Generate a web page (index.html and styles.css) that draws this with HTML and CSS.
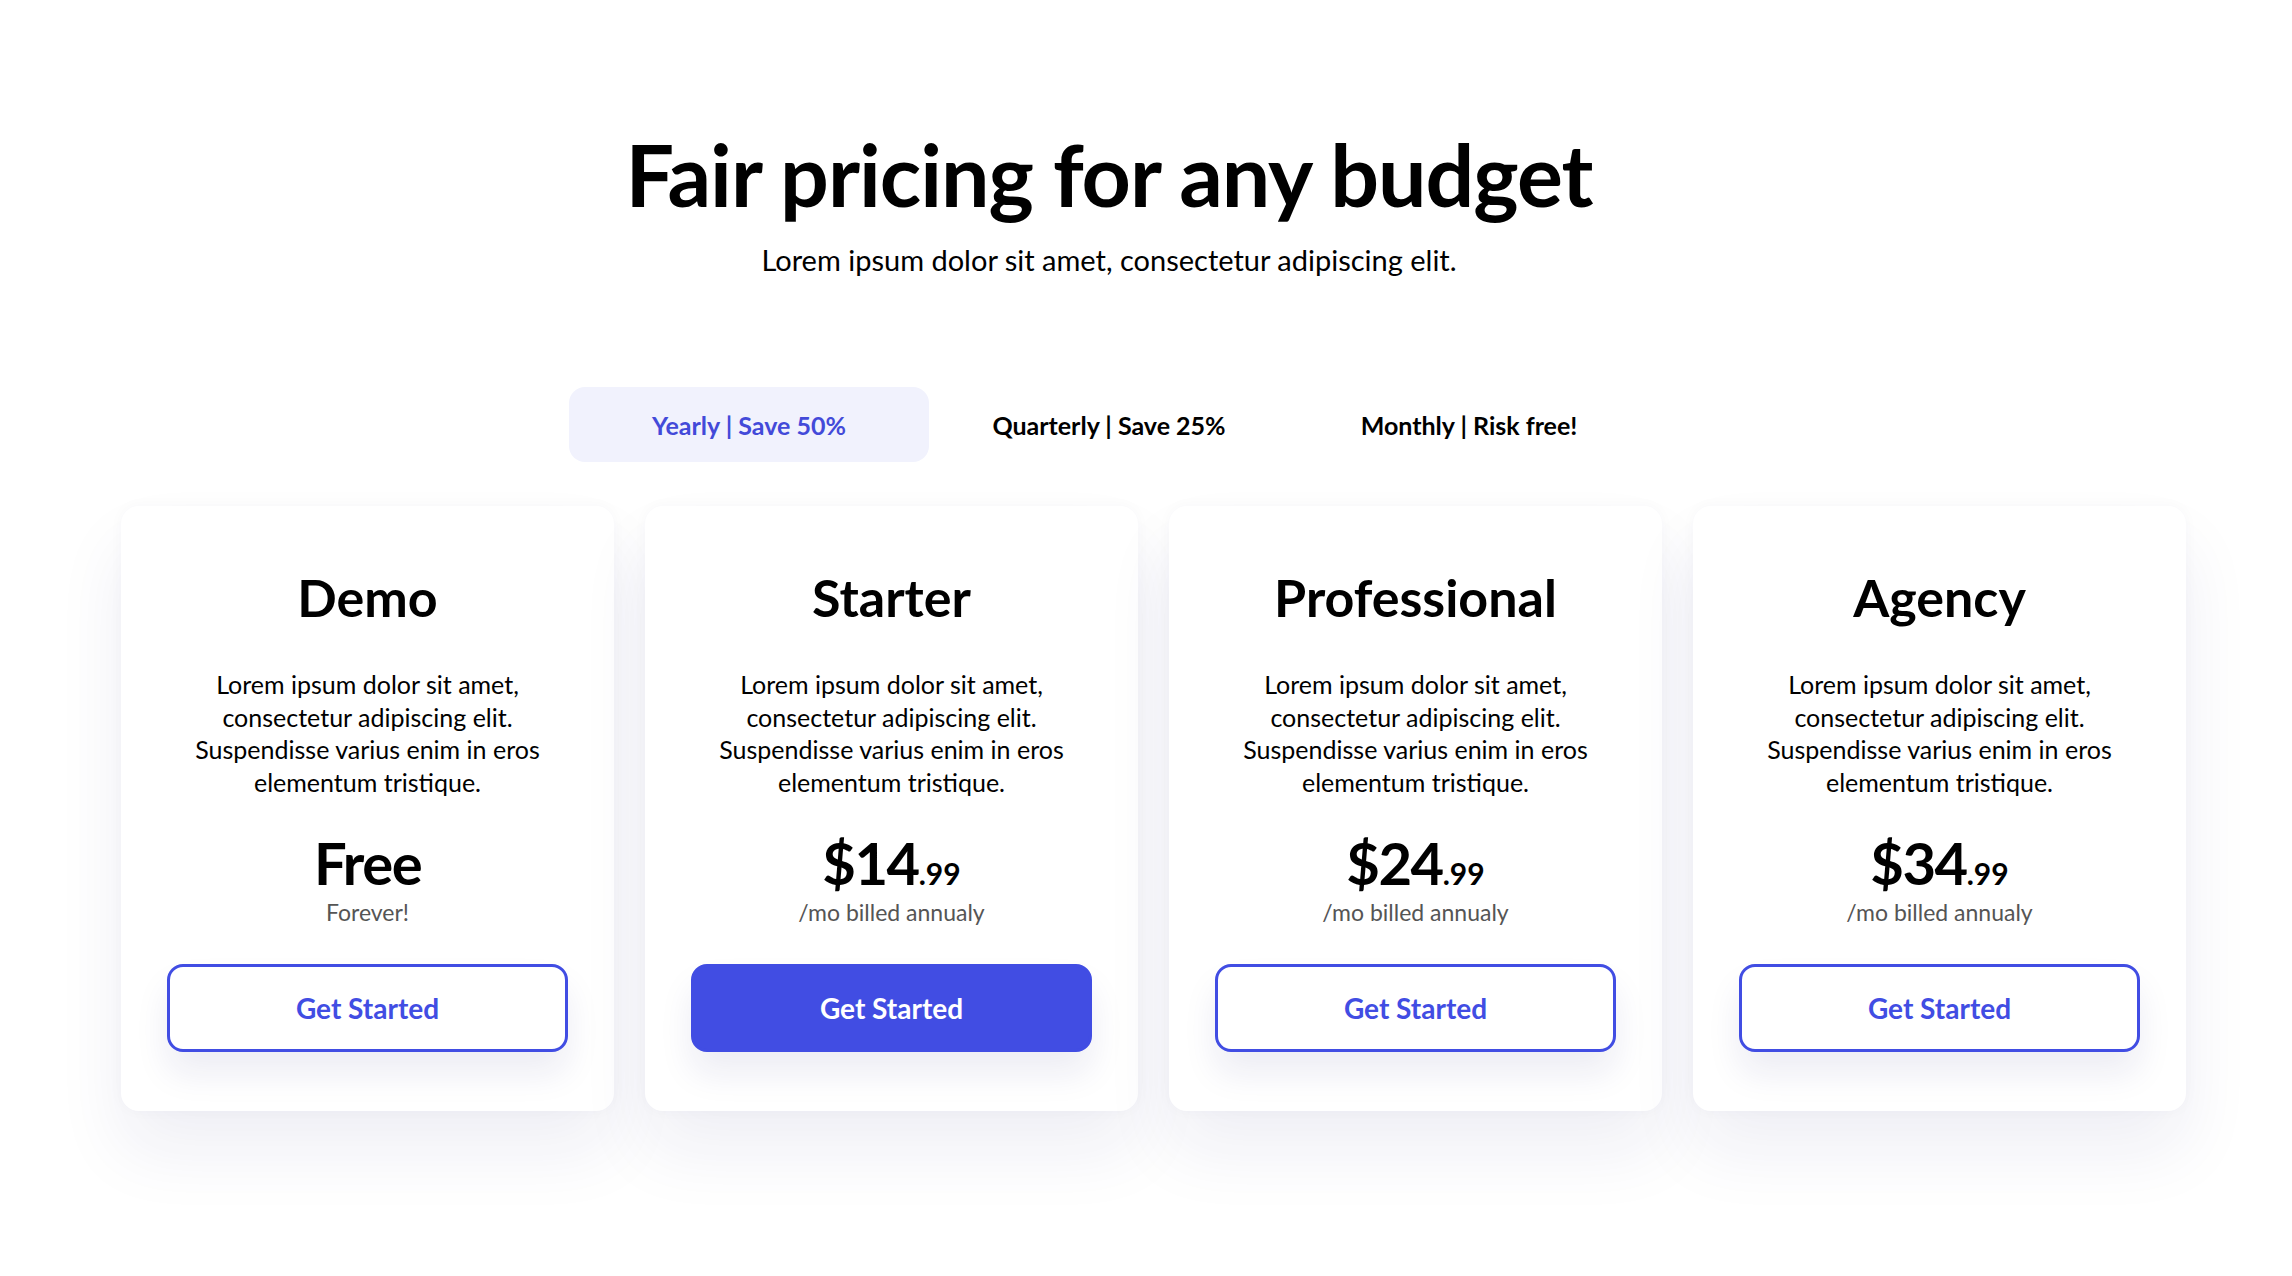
FILE: index.html
```html
<!DOCTYPE html>
<html lang="en">
  <head>
    <meta charset="UTF-8" />
    <meta name="viewport" content="width=device-width, initial-scale=1.0" />
    <title>Pricing</title>
    <link rel="stylesheet" href="styles.css">
  </head>
  <body>
    <div class="header">
      <h1 class="title">Fair pricing for any budget</h1>
      <p class="subtitle">Lorem ipsum dolor sit amet, consectetur adipiscing elit.</p>

      <div class="tabs">
        <div class="tab active">Yearly | Save 50%</div>
        <div class="tab">Quarterly | Save 25%</div>
        <div class="tab">Monthly | Risk free!</div>
      </div>
    </div>

    <div class="plans">
      <div class="card">
        <h2 class="plan-name">Demo</h2>
        <p class="plan-text">Lorem ipsum dolor sit amet, consectetur adipiscing elit. Suspendisse varius enim in eros elementum tristique.</p>
        <div class="price">Free</div>
        <div class="price-note">Forever!</div>
        <a class="btn" href="#">Get Started</a>
      </div>

      <div class="card">
        <h2 class="plan-name">Starter</h2>
        <p class="plan-text">Lorem ipsum dolor sit amet, consectetur adipiscing elit. Suspendisse varius enim in eros elementum tristique.</p>
        <div class="price">$14<span class="cents">.99</span></div>
        <div class="price-note">/mo billed annualy</div>
        <a class="btn btn-filled" href="#">Get Started</a>
      </div>

      <div class="card">
        <h2 class="plan-name">Professional</h2>
        <p class="plan-text">Lorem ipsum dolor sit amet, consectetur adipiscing elit. Suspendisse varius enim in eros elementum tristique.</p>
        <div class="price">$24<span class="cents">.99</span></div>
        <div class="price-note">/mo billed annualy</div>
        <a class="btn" href="#">Get Started</a>
      </div>

      <div class="card">
        <h2 class="plan-name">Agency</h2>
        <p class="plan-text">Lorem ipsum dolor sit amet, consectetur adipiscing elit. Suspendisse varius enim in eros elementum tristique.</p>
        <div class="price">$34<span class="cents">.99</span></div>
        <div class="price-note">/mo billed annualy</div>
        <a class="btn" href="#">Get Started</a>
      </div>
    </div>
  </body>
</html>
```

FILE: styles.css
```css
body {
  margin: 0;
  background-color: #ffffff;
  color: #000000;
  font-family: Lato, "Open Sans", sans-serif;
}
.header {
  display: flex;
  flex-direction: column;
  align-items: center;
  padding-top: 124px;
  padding-right: 74px;
}
.title {
  margin: 0;
  font-size: 86px;
  line-height: 100px;
  font-weight: 700;
  letter-spacing: -1px;
}
.subtitle {
  margin: 18px 0 0 0;
  font-size: 29px;
  line-height: 36px;
}
.tabs {
  display: flex;
  margin-top: 109px;
}
.tab {
  width: 360px;
  height: 75px;
  display: flex;
  align-items: center;
  justify-content: center;
  border-radius: 16px;
  font-size: 25px;
  font-weight: 700;
  cursor: pointer;
}
.tab.active {
  background-color: #f1f2fd;
  color: #434ad9;
}
.plans {
  display: grid;
  grid-template-columns: repeat(4, 493px);
  gap: 31px;
  padding-left: 121px;
  padding-bottom: 160px;
  margin-top: 44px;
}
.card {
  display: flex;
  flex-direction: column;
  align-items: center;
  height: 605px;
  box-sizing: border-box;
  padding: 59px 46px 0 46px;
  border-radius: 18px;
  background-color: #ffffff;
  box-shadow: 0 0 14px rgba(30, 30, 90, 0.03), 0 40px 70px rgba(30, 30, 110, 0.07);
  text-align: center;
}
.plan-name {
  margin: 0;
  font-size: 52px;
  line-height: 64px;
  font-weight: 700;
}
.plan-text {
  margin: 39px 0 0 0;
  font-size: 25px;
  line-height: 32.6px;
  width: 380px;
}
.price {
  margin-top: 33px;
  font-size: 58px;
  line-height: 64px;
  font-weight: 700;
  letter-spacing: -1.5px;
}
.cents {
  font-size: 30px;
  line-height: 0;
  letter-spacing: 0;
}
.price-note {
  margin-top: 2px;
  font-size: 23px;
  line-height: 30px;
  color: #555555;
}
.btn {
  margin-top: 37px;
  width: 100%;
  height: 88px;
  box-sizing: border-box;
  display: flex;
  align-items: center;
  justify-content: center;
  border: 3px solid #414de3;
  border-radius: 16px;
  background-color: #ffffff;
  color: #414de3;
  font-size: 28px;
  font-weight: 700;
  text-decoration: none;
  box-shadow: 0 22px 34px rgba(30, 30, 110, 0.08);
}
.btn-filled {
  background-color: #414de3;
  color: #ffffff;
}
```
